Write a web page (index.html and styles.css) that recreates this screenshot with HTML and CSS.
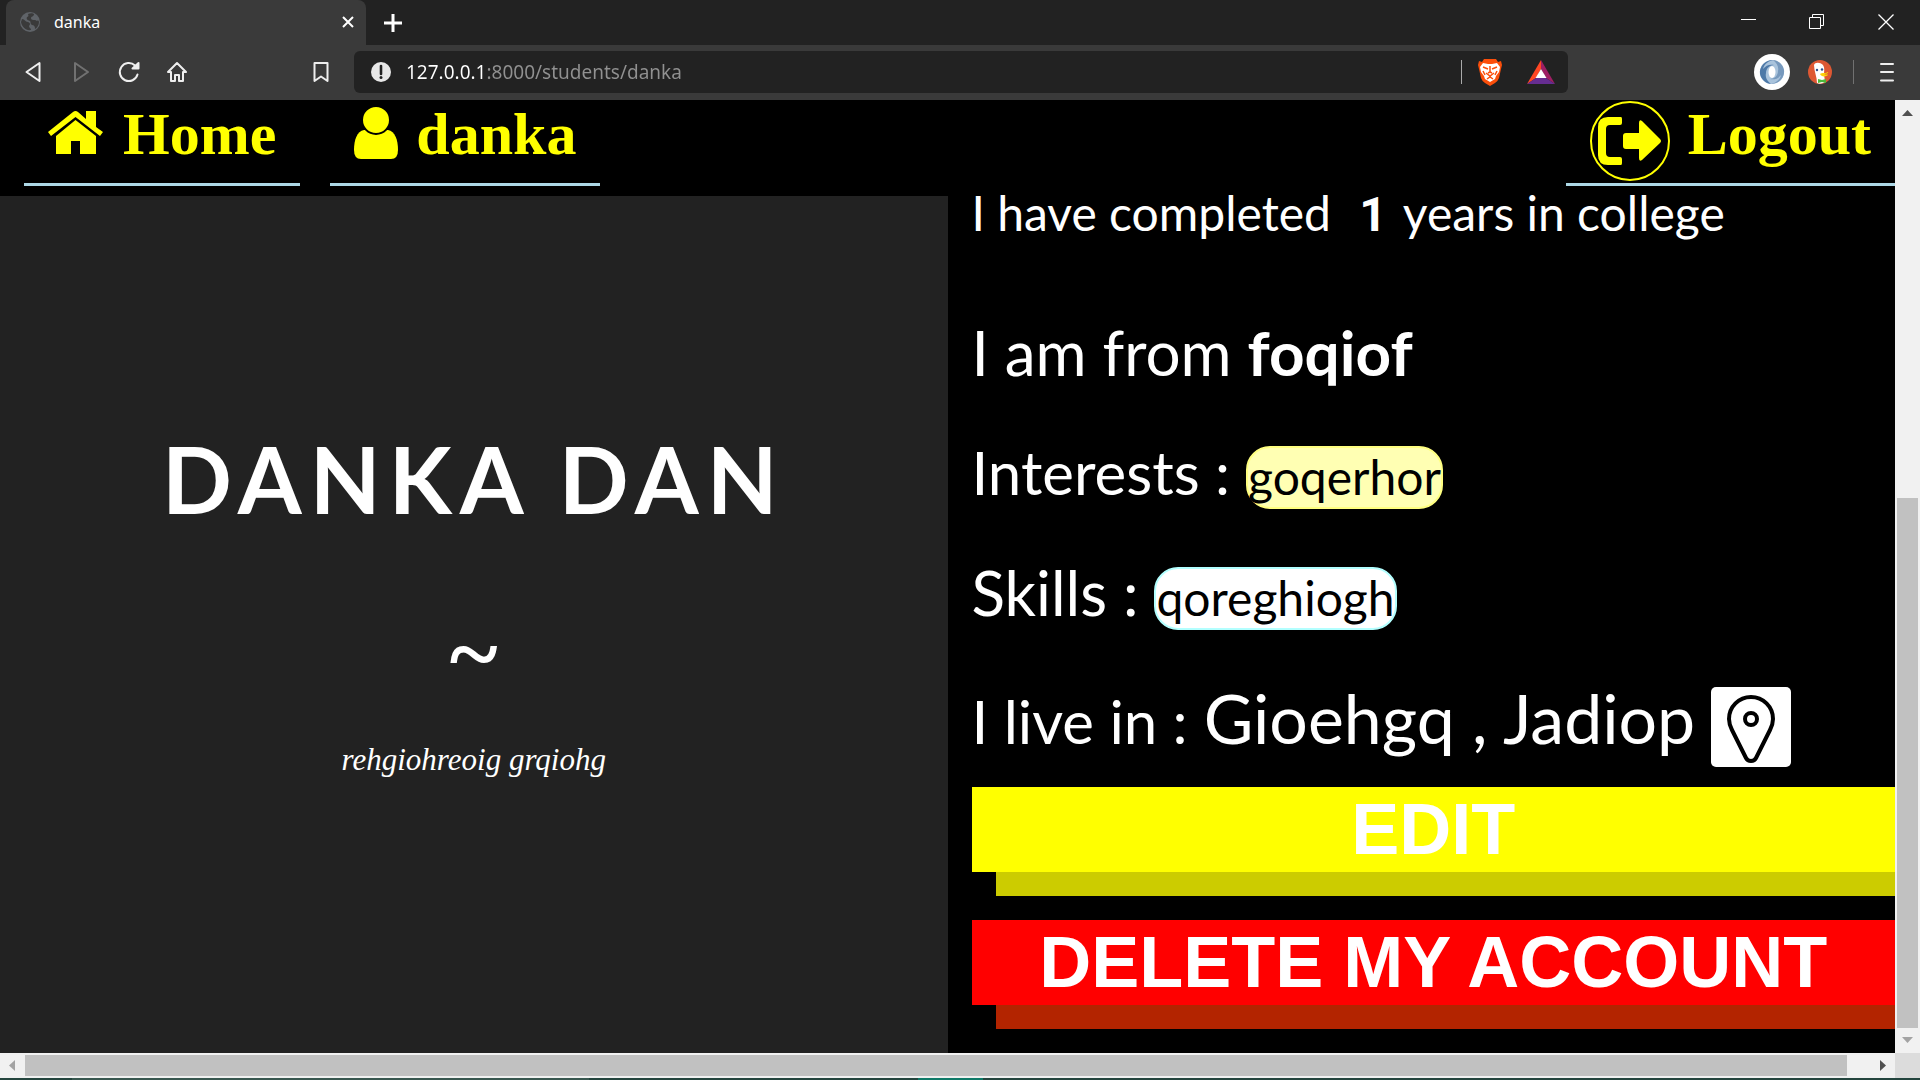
FILE: index.html
```html
<!DOCTYPE html>
<html lang="en">
<head>
<meta charset="utf-8">
<title>danka</title>
<link rel="stylesheet" href="styles.css">
</head>
<body>
<div class="window">
  <div class="tabstrip">
    <div class="tab">
      <svg class="tab-globe" width="22" height="22" viewBox="0 0 22 22"><circle cx="11" cy="11" r="10" fill="#5f6368"/><path d="M3 8c3 0 3 3 6 3 3 1 2 3 1 4 0 2 2 2 2 4-5 1-9-3-10-8zM9 3c2-1 5-1 6 0 0 3-3 2-3 4 0 3 4 1 6 3 1-1 2 0 2 1 0 3-2 6-4 7 0-3-1-4-3-4-2-1-1-3-2-4-3-1-4-2-3-4 1 0 2-1 1-3z" fill="#3a3a3a"/></svg>
      <span class="tab-title">danka</span>
      <button class="tab-close" aria-label="Close tab"><svg width="14" height="14" viewBox="0 0 14 14" fill="none" stroke="#fff" stroke-width="2"><path d="M2 2l10 10M12 2L2 12"/></svg></button>
    </div>
    <button class="new-tab" aria-label="New tab"><svg width="20" height="20" viewBox="0 0 20 20" fill="none" stroke="#fff" stroke-width="3"><path d="M10 1v18M1 10h18"/></svg></button>
    <div class="window-buttons">
      <button aria-label="Minimize"><svg width="16" height="16" viewBox="0 0 16 16" stroke="#fff"><path d="M1 5.500h15"/></svg></button>
      <button aria-label="Restore"><svg width="16" height="16" viewBox="0 0 16 16" fill="none" stroke="#fff"><path d="M.5 3.500h11v11H.5zM3.500 3.500v-3h11v11h-3"/></svg></button>
      <button aria-label="Close"><svg width="16" height="16" viewBox="0 0 16 16" fill="none" stroke="#fff" stroke-width="1.300"><path d="M.5.5l15 15M15.500.5l-15 15"/></svg></button>
    </div>
  </div>

  <div class="toolbar">
    <button class="tool" aria-label="Back"><svg width="24" height="24" viewBox="0 0 24 24" fill="none" stroke="#eee" stroke-width="2" stroke-linejoin="round"><path d="M18.500 3v18L5.500 12z"/></svg></button>
    <button class="tool" aria-label="Forward"><svg width="24" height="24" viewBox="0 0 24 24" fill="none" stroke="#717171" stroke-width="2" stroke-linejoin="round"><path d="M6 3v18l13-9z"/></svg></button>
    <button class="tool" aria-label="Reload"><svg width="24" height="24" viewBox="0 0 24 24" fill="none" stroke="#eee" stroke-width="2" stroke-linecap="round"><path d="M20.500 14.500A9 9 0 1 1 18 5.500"/><path d="M21.500 3v5.500h-6z" fill="#eee" stroke-linejoin="round"/></svg></button>
    <button class="tool" aria-label="Home page"><svg width="24" height="24" viewBox="0 0 24 24" fill="none" stroke="#eee" stroke-width="2" stroke-linejoin="round" stroke-linecap="round"><path d="M3 12l9-9 9 9h-3v9h-4v-6h-4v6H6v-9z"/></svg></button>
    <button class="tool bookmark" aria-label="Bookmark"><svg width="24" height="24" viewBox="0 0 24 24" fill="none" stroke="#eee" stroke-width="2" stroke-linejoin="round"><path d="M5.500 3h13v18L12 16.500 5.500 21z"/></svg></button>
    <div class="address">
      <svg width="20" height="20" viewBox="0 0 20 20"><circle cx="10" cy="10" r="10" fill="#e8e8e8"/><path d="M10 4v8" stroke="#222" stroke-width="2.600" stroke-linecap="round"/><circle cx="10" cy="15.500" r="1.500" fill="#222"/></svg>
      <input class="url" type="text" aria-label="Address" value="127.0.0.1:8000/students/danka">
      <span class="address-rule"></span>
      <button class="tool" aria-label="Shields"><svg width="24" height="28" viewBox="0 0 24 28"><path d="M6 1h12l2 3 3-1 1 4-1 4-2 9q-1 3-4 5l-5 3-5-3q-3-2-4-5L1 11 0 7l1-4 3 1z" fill="#fb4f0b"/><path d="M5 5l5 1h4l5-1 3 4-1 5-3 4-1 3-5 3-5-3-1-3-3-4-1-5z" fill="#fff"/><path d="M5 9l5 2M19 9l-5 2M12 8v6M8 15l4 3 4-3M12 14l-2 1M12 14l2 1M9 21l3-2 3 2M5 13l2 4M19 13l-2 4" fill="none" stroke="#fb4f0b" stroke-width="1.500"/></svg></button>
      <button class="tool" aria-label="Rewards"><svg width="28" height="24" viewBox="0 0 28 24"><path d="M14 0L0 24l9-6 5-9z" fill="#ff4724"/><path d="M14 0l14 24-9-6-5-9z" fill="#9e1f63"/><path d="M0 24l9-6h10l9 6z" fill="#662d91"/><path d="M14 9l5.500 9h-11z" fill="#fff"/></svg></button>
    </div>
    <div class="extensions">
      <button class="tool" aria-label="JSON viewer"><svg width="36" height="36" viewBox="0 0 36 36"><circle cx="18" cy="18" r="18" fill="#fff"/><circle cx="18" cy="18" r="12" fill="#a9c3dc"/><path d="M21 6C11 5 5 13 6 20c1 6 7 10 11 10-4-3-6-7-5-11 0-5 4-8 8-8-4-1-8 0-11 4 1-5 6-9 12-9z" fill="#4d79a8"/><path d="M15 30c10 1 16-7 15-14-1-6-7-10-11-10 4 3 6 7 5 11 0 5-4 8-8 8 4 1 8 0 11-4-1 5-6 9-12 9z" fill="#7799bd"/><ellipse cx="18" cy="18" rx="3.500" ry="6" fill="#fff"/></svg></button>
      <button class="tool" aria-label="Privacy search"><svg width="24" height="24" viewBox="0 0 24 24"><circle cx="12" cy="12" r="12" fill="#de5833"/><path d="M6 5c1-3 6-3 9 0 2 3 1 6 1 9l1 8c-3 2-6 2-8 1C9 17 6 11 6 5z" fill="#fff"/><circle cx="9" cy="10" r="1.200" fill="#2d4f8e"/><circle cx="14" cy="9.500" r="1.200" fill="#2d4f8e"/><path d="M12 14c2-2 5 0 8-2 1 1-2 2-4 2 2 1 4 0 4 1-2 2-7 2-8-1z" fill="#fdd20a"/><path d="M10 19l4 1 4-1v4l-4-1-4 1z" fill="#4cba3c"/></svg></button>
      <span class="toolbar-rule"></span>
      <button class="tool" aria-label="Menu"><svg width="14" height="20" viewBox="0 0 14 20" stroke="#eee" stroke-width="2" stroke-linecap="round"><path d="M1 2h12M1 10h12M1 18.500h12"/></svg></button>
    </div>
  </div>

  <div class="viewport">
    <div class="page">
      <nav class="nav">
        <a class="nav-link" href="#">
          <svg width="57" height="68" viewBox="0 0 57 68" fill="#ff0"><path d="M0 32L25 12q2.500-2 5 0l8 7v-8h10v16l7 5-3 4-24.500-19L3 36z"/><path d="M27.500 20L48 36v18H32V41h-9v13H8V36z"/></svg>
          <span>Home</span>
        </a>
        <a class="nav-link" href="#">
          <svg width="44" height="68" viewBox="0 0 44 68" fill="#ff0"><path d="M10 30h24c7 1 10 10 10 20q0 9-7 9H7q-7 0-7-9c0-10 3-19 10-20z"/><circle cx="22" cy="20" r="14" stroke="#000" stroke-width="2"/></svg>
          <span>danka</span>
        </a>
        <a class="nav-link nav-logout" href="#">
          <svg width="80" height="82" viewBox="0 0 80 82" fill="#ff0"><circle cx="40" cy="41" r="39" fill="none" stroke="#ff0" stroke-width="2"/><path d="M31 17H18Q8 17 8 27v28q0 10 10 10h13q1 0 1-2v-4q0-2-2-2H20q-4 0-4-4V29q0-4 4-4h10q2 0 2-2v-4q0-2-1-2z"/><path d="M36 33h13V23q0-4 3-2l18 18q2 2 0 4L52 60q-3 2-3-2v-9H36q-3 0-3-3V36q0-3 3-3z"/></svg>
          <span>Logout</span>
        </a>
      </nav>
      <main class="profile">
        <section class="intro">
          <h1 class="name">DANKA DAN</h1>
          <div class="tilde">~</div>
          <p class="motto">rehgiohreoig grqiohg</p>
        </section>
        <section class="details">
          <p class="row row-years"><span>I have completed&nbsp;</span><b class="digit">1</b><span>years in college</span></p>
          <p class="row row-large"><span>I am from</span><b>foqiof</b></p>
          <p class="row"><span>Interests :</span><span class="pill pill-interest">goqerhor</span></p>
          <p class="row row-large"><span>Skills :</span><span class="pill pill-skill">qoreghiogh</span></p>
          <p class="row row-place"><span>I live in :</span><span class="place">Gioehgq , Jadiop</span>
            <a class="map-link" href="#" aria-label="Map"><svg width="80" height="80" viewBox="0 0 80 80" fill="none" stroke="#000" stroke-width="4"><path d="M18 32a22 22 0 0 1 44 0c0 4-1 7-3 11L45 71c-2 4-8 4-10 0L21 43c-2-4-3-7-3-11z"/><circle cx="40" cy="32" r="6"/></svg></a></p>
          <div class="actions">
            <button class="action action-edit">EDIT</button>
            <button class="action action-delete">DELETE MY ACCOUNT</button>
          </div>
        </section>
      </main>
    </div>
    <div class="vscroll">
      <svg width="25" height="25" viewBox="0 0 25 25"><path d="M7 16l5.500-6 5.500 6z" fill="#505050"/></svg>
      <div class="vthumb"></div>
      <svg width="25" height="25" viewBox="0 0 25 25"><path d="M7 9l5.500 6L18 9z" fill="#a3a3a3"/></svg>
    </div>
    <div class="hscroll">
      <svg width="25" height="25" viewBox="0 0 25 25"><path d="M15 7l-6 5.500 6 5.500z" fill="#a3a3a3"/></svg>
      <div class="hthumb"></div>
      <svg width="25" height="25" viewBox="0 0 25 25"><path d="M10 7l6 5.500-6 5.500z" fill="#505050"/></svg>
    </div>
    <div class="corner"></div>
  </div>
  <div class="desktop-edge"></div>
</div>
</body>
</html>
```

FILE: styles.css
```css
* { box-sizing: border-box; }
body { margin: 0; background: #000; font-family: Lato, sans-serif; }
button { border: 0; padding: 0; background: none; color: inherit; font: inherit; }
h1, p { margin: 0; }
svg { display: block; flex: none; }

.window { display: flex; flex-direction: column; min-height: 100vh; }

/* Browser tabs */
.tabstrip { display: flex; height: 45px; padding-left: 6px; background: #222; font-family: "Noto Sans", sans-serif; }
.tab { display: flex; align-items: center; width: 360px; padding: 0 11px 2px 13px; background: #3a3a3a; border-radius: 8px 8px 0 0; color: #fff; }
.tab-title { flex: 1; margin-left: 13px; font-size: 16px; line-height: 24px; }
.new-tab { width: 54px; display: grid; place-items: center; }
.window-buttons { display: flex; margin-left: auto; padding-bottom: 2px; }
.window-buttons button { width: 69px; display: grid; place-items: center; }

/* Browser toolbar */
.toolbar { display: flex; align-items: center; height: 55px; padding: 0 9px 2px; background: #3a3a3a; }
.tool { display: grid; place-items: center; width: 48px; height: 42px; flex: none; }
.bookmark { margin-left: 96px; }
.address { display: flex; align-items: center; flex: 1; height: 42px; margin-left: 9px; padding: 0 3px 0 17px; border-radius: 6px; background: #222; }
.url { flex: 1; min-width: 0; margin-left: 15px; padding: 0; border: 0; font: 19px/28px "Noto Sans", sans-serif; color: transparent; background: linear-gradient(90deg, #fff 80px, #919191 80px); -webkit-background-clip: text; background-clip: text; }
.address-rule, .toolbar-rule { width: 1px; height: 24px; background: #aaa; }
.address-rule { margin-right: 4px; }
.address .tool + .tool { margin-left: 3px; }
.extensions { display: flex; align-items: center; padding-left: 180px; }
.toolbar-rule { margin: 0 9px; background: #717171; }

/* Viewport with its scroll bars */
.viewport { flex: 1; display: grid; grid-template-columns: minmax(0, 1fr) 25px; grid-template-rows: 1fr 25px; }
.page { display: flex; flex-direction: column; overflow-x: clip; background: #000; }
.vscroll { display: flex; flex-direction: column; background: #f1f1f1; }
.vthumb { flex: 1; margin: 373px 2px 0; background: #c1c1c1; }
.hscroll { display: flex; background: #f1f1f1; }
.hthumb { flex: 1; margin: 2px 23px 2px 0; background: #c1c1c1; }
.corner { background: #dcdcdc; }
.desktop-edge { height: 2px; background: linear-gradient(90deg, #24453e 72px, #38574f 72px 589px, #24453e 589px 918px, #0f7a68 918px 983px, #24453e 983px); }

/* Site navigation */
.nav { display: flex; gap: 30px; height: 96px; padding-left: 24px; }
.nav-link { display: flex; gap: 18px; height: 86px; padding: 0 24px; border-bottom: 3px solid lightblue; color: #ff0; font: bold 60px/68px "Liberation Serif", serif; text-decoration: none; }
.nav-logout { margin-left: auto; }

/* Profile */
.profile { flex: 1; display: grid; grid-template-columns: 1fr 1fr; color: #fff; }
.intro { display: flex; flex-direction: column; align-items: center; padding-top: 223px; background: #222; }
.name { font-size: 92px; line-height: 120px; font-weight: 700; letter-spacing: 8px; }
.tilde { margin-top: 54px; font: bold 92px/120px "Liberation Serif", serif; }
.motto { margin-top: 27px; font: italic 31px/40px "Liberation Serif", serif; }

.details { padding-left: 24px; }
.row { display: flex; align-items: baseline; gap: 16px; font-size: 60px; line-height: 120px; white-space: nowrap; }
.row-large { font-size: 62px; }
.row-years { margin-bottom: 60px; font-size: 48px; line-height: 34px; }
.digit { font-family: Roboto, sans-serif; }
.pill { padding-bottom: 2px; border: 2px solid; border-radius: 24px; font-size: 48px; line-height: 57px; color: #000; }
.pill-interest { background: #ffffb3; border-color: #ffff80; }
.pill-skill { background: #fff; border-color: #b3ffff; }
.row-place { line-height: 132px; }
.place { font-size: 68px; }
.map-link { align-self: flex-end; margin-bottom: 20px; border-radius: 5px; background: #fff; }

.actions { display: grid; gap: 48px; padding-bottom: 48px; }
.action { width: 100%; font: bold 72px/85px "Liberation Sans", sans-serif; color: #fff; }
.action-edit { background: #ff0; box-shadow: 24px 24px #cc0; }
.action-delete { background: #f00; box-shadow: 24px 24px #b32400; }
```
